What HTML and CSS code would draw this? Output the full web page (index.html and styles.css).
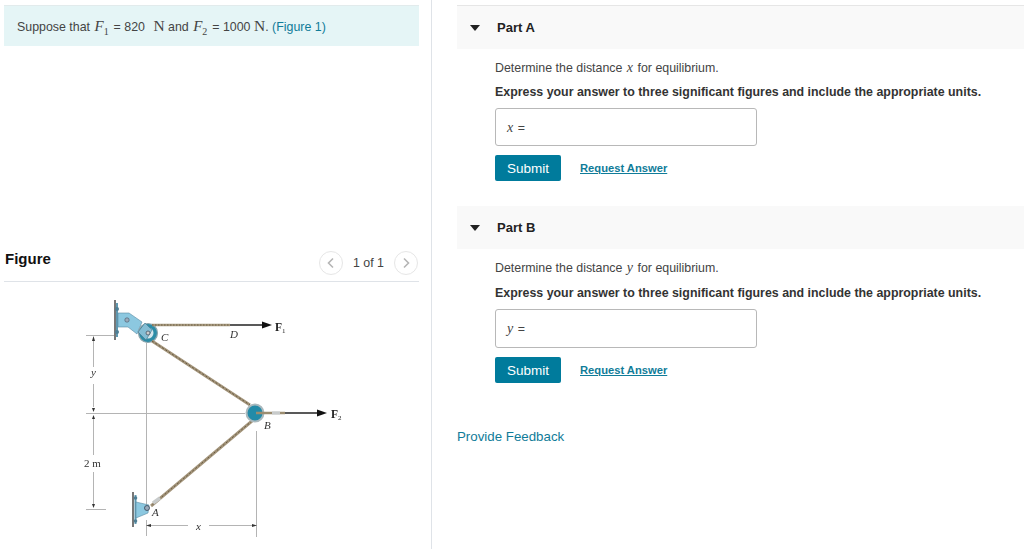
FILE: index.html
```html
<!DOCTYPE html>
<html lang="en">
<head>
<meta charset="utf-8">
<title>Equilibrium problem</title>
<link rel="stylesheet" href="styles.css">
</head>
<body>
<div class="page">
  <aside class="left">
    <div class="intro">Suppose that <span class="m"><i>F</i><sub>1</sub></span> = 820 <span class="unit">N</span> and <span class="m"><i>F</i><sub>2</sub></span> = 1000 <span class="unit n2">N</span>. <a class="link" href="#">(Figure 1)</a></div>
    <div class="fig-head">
      <h2>Figure</h2>
      <div class="pager">
        <span class="circ"><svg width="10" height="12" viewBox="0 0 10 12"><path d="M7 1.500 2.500 6 7 10.500" fill="none" stroke="#b5b5b5" stroke-width="1.600"/></svg></span>
        <span class="count">1 of 1</span>
        <span class="circ"><svg width="10" height="12" viewBox="0 0 10 12"><path d="M3 1.500 7.500 6 3 10.500" fill="none" stroke="#b5b5b5" stroke-width="1.600"/></svg></span>
      </div>
    </div>
    <svg class="diagram" width="431" height="267" viewBox="0 282 431 267">
      <g fill="none" stroke="#b4b4b4" stroke-width="1">
        <path d="M86 335.500H114M86 413.500H245M86 509.500H106"/>
        <path d="M93.500 338V367M93.500 384V407M93.500 419V455M93.500 472V506"/>
        <path d="M146.500 343V505M146.500 520V536M256.500 431V537"/>
        <path d="M148 525.500H188M209 525.500H254"/>
      </g>
      <g fill="#333">
        <path d="M93.500 336 92 341H95ZM93.500 412 92 408H95ZM93.500 415 92 419H95ZM93.500 508 92 504H95ZM146 525.500 151 524V527ZM257 525.500 252 524V527Z"/>
      </g>
      <path d="M115 300V340" stroke="#777" stroke-width="2"/>
      <path d="M117 303V337" stroke="#5f98b0" stroke-width="2"/>
      <circle cx="117" cy="309" r="2" fill="#4f7f95"/>
      <circle cx="117" cy="332" r="2" fill="#4f7f95"/>
      <path d="M118 313H129L142 322 137 334 128 327H118Z" fill="#8cc8e0" stroke="#5c8ca3" stroke-width=".6"/>
      <circle cx="148" cy="333" r="9.500" fill="#2c8ca6" stroke="#8fa6ae" stroke-width="1.200"/>
      <circle cx="148" cy="333" r="5.500" fill="#d5e6ec"/>
      <path d="M138 332 145 323 152 330 146 340Z" fill="#84bdd4" stroke="#47758a" stroke-width=".6"/>
      <circle cx="148" cy="333" r="2" fill="#ccc" stroke="#456" stroke-width=".8"/>
      <circle cx="127" cy="320" r="2.200" fill="#9ab" stroke="#456" stroke-width=".6"/>
      <path d="M152 325H230" stroke="#a89a7f" stroke-width="2.500"/>
      <path d="M152 325H230" stroke="#6a5d45" stroke-width="1" stroke-dasharray="1.500 1.500"/>
      <path d="M230 325H266" stroke="#222" stroke-width="1.500"/>
      <path d="M272 325 262 321.500V328.500Z" fill="#111"/>
      <path d="M152 341 250 405" stroke="#a3947a" stroke-width="3"/>
      <path d="M152 341 250 405" stroke="#655840" stroke-width="1" stroke-dasharray="2 2"/>
      <path d="M252 421 151 506" stroke="#a3947a" stroke-width="3"/>
      <path d="M252 421 151 506" stroke="#655840" stroke-width="1" stroke-dasharray="2 2"/>
      <circle cx="255" cy="413" r="8.500" fill="#238ba8" stroke="#a9b8bd" stroke-width="2"/>
      <path d="M256 413H272" stroke="#9c8d70" stroke-width="2.500"/>
      <path d="M272 413H280" stroke="#c8cbcb" stroke-width="3.500"/>
      <path d="M280 413H285" stroke="#9c8d70" stroke-width="2.500"/>
      <path d="M285 413H322" stroke="#222" stroke-width="1.500"/>
      <path d="M327 413 317 409.500V416.500Z" fill="#111"/>
      <path d="M133 492V527" stroke="#777" stroke-width="2"/>
      <path d="M135.500 495V524" stroke="#5f98b0" stroke-width="2"/>
      <circle cx="135.500" cy="498" r="1.800" fill="#4f7f95"/>
      <circle cx="135.500" cy="521" r="1.800" fill="#4f7f95"/>
      <path d="M136 502 149 505 148 513 136 518Z" fill="#8cc8e0" stroke="#5c8ca3" stroke-width=".6"/>
      <circle cx="147" cy="508" r="2.500" fill="#9ab" stroke="#345" stroke-width=".8"/>
      <path d="M153 503 160 498" stroke="#c8cbcb" stroke-width="3.500"/>
      <g class="lbl">
        <text x="161" y="341">C</text>
        <text x="230" y="338">D</text>
        <text x="264" y="429">B</text>
        <text x="152" y="516">A</text>
        <text x="91" y="376">y</text>
        <text x="196" y="530">x</text>
      </g>
      <text class="dim" x="84" y="467">2 m</text>
      <text class="force" x="275" y="331">F<tspan class="fs" dy="2">1</tspan></text>
      <text class="force" x="331" y="418">F<tspan class="fs" dy="2">2</tspan></text>
    </svg>
  </aside>
  <main class="right">
    <section class="part">
      <header class="part-head top"><svg class="caret" width="10" height="6" viewBox="0 0 10 6"><path d="M0 0H10L5 6Z" fill="#222"/></svg><h3>Part A</h3></header>
      <div class="part-body">
        <p>Determine the distance <i class="v">x</i> for equilibrium.</p>
        <p class="strong">Express your answer to three significant figures and include the appropriate units.</p>
        <div class="answer"><i class="v">x</i> =</div>
        <div class="actions"><button class="submit">Submit</button><a class="req" href="#">Request Answer</a></div>
      </div>
    </section>
    <section class="part second">
      <header class="part-head"><svg class="caret" width="10" height="6" viewBox="0 0 10 6"><path d="M0 0H10L5 6Z" fill="#222"/></svg><h3>Part B</h3></header>
      <div class="part-body">
        <p>Determine the distance <i class="v">y</i> for equilibrium.</p>
        <p class="strong">Express your answer to three significant figures and include the appropriate units.</p>
        <div class="answer"><i class="v">y</i> =</div>
        <div class="actions"><button class="submit">Submit</button><a class="req" href="#">Request Answer</a></div>
      </div>
    </section>
    <a class="feedback" href="#">Provide Feedback</a>
  </main>
</div>
</body>
</html>
```
FILE: styles.css
```css
* { box-sizing: border-box; }
html, body { margin: 0; padding: 0; }
body { background: #fff; font-family: "Liberation Sans", Arial, sans-serif; font-size: 12.400px; color: #333; overflow: hidden; }
.page { display: flex; width: 1024px; height: 549px; }
.left { width: 432px; flex: none; border-right: 1px solid #dfe3e8; padding: 5px 12px 0 4px; overflow: hidden; }
.intro { height: 41px; background: #e5f5f6; border-top: 1px solid #e2ebec; padding: 12px 13px 0; line-height: 16px; white-space: nowrap; color: #444; }
.m { font-family: "Liberation Serif", serif; font-size: 15px; margin-left: 1px; }
.m sub { font-size: 10px; line-height: 0; font-style: normal; margin-right: 1.500px; }
.unit { font-family: "Liberation Serif", serif; font-size: 15.500px; margin-left: 5px; }
.unit.n2 { margin-left: 0; }
.link { color: #107c99; text-decoration: none; }
.fig-head { display: flex; justify-content: space-between; align-items: center; height: 33px; margin-top: 203px; padding: 0 0 14px 1px; border-bottom: 1px solid #dfe3e8; }
.fig-head h2 { margin: 0; font-size: 15px; font-weight: bold; color: #111; }
.pager { display: flex; align-items: center; gap: 10px; margin-right: 1px; margin-top: 9px; }
.circ { width: 24px; height: 24px; border: 1px solid #e6e6e6; border-radius: 50%; display: flex; align-items: center; justify-content: center; }
.count { color: #444; }
.diagram { display: block; margin-left: -4px; filter: blur(.3px); }
.lbl text { font-family: "Liberation Serif", serif; font-style: italic; font-size: 11px; fill: #333; }
.dim { font-family: "Liberation Serif", serif; font-size: 11px; fill: #333; }
.force { font-family: "Liberation Serif", serif; font-weight: bold; font-size: 11.500px; fill: #222; }
.fs { font-size: 7px; font-weight: normal; }
.right { flex: 1; min-width: 0; padding: 5px 0 0 25px; }
.part-head { display: flex; align-items: center; height: 43px; background: #f9f9f9; padding-left: 13px; }
.part-head.top { height: 44px; border-top: 1px solid #e6e6e6; }
.caret { margin-right: 17px; }
.part-head h3 { margin: 0; font-size: 13px; font-weight: bold; color: #222; }
.part-body { padding: 12px 0 0 38px; }
.part-body p { margin: 0; line-height: 14px; color: #444; }
.part-body p.strong { margin-top: 10px; font-weight: bold; color: #333; }
.v { font-family: "Liberation Serif", serif; font-size: 14px; margin: 0 1px; }
.answer { width: 262px; height: 38px; margin-top: 9px; border: 1px solid #b8b8b8; border-radius: 3px; padding: 12px 0 0 10px; line-height: 14px; color: #444; }
.actions { display: flex; align-items: center; margin-top: 9px; }
.submit { width: 66px; height: 26px; padding: 0; border: 0; border-radius: 2px; background: #007b9c; color: #fff; font: 13.500px "Liberation Sans", Arial, sans-serif; }
.req { margin-left: 19px; color: #107c99; font-weight: bold; font-size: 11.200px; }
.second { margin-top: 25px; }
.second .part-body p.strong { margin-top: 11px; }
.second .answer { height: 39px; }
.feedback { display: block; margin-top: 46px; color: #107c99; text-decoration: none; font-size: 13.300px; }
```
